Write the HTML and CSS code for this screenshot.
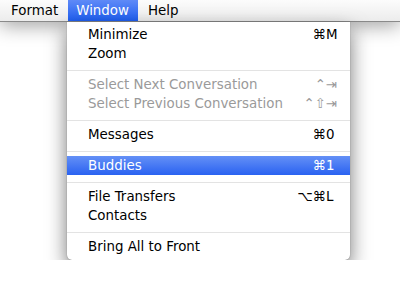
FILE: index.html
```html
<!DOCTYPE html>
<html lang="en">
<head>
<meta charset="UTF-8">
<meta name="viewport" content="width=device-width, initial-scale=1.0">
<title>Window Menu</title>
<link rel="stylesheet" href="styles.css">
</head>
<body>

<div class="menubar">
  <span class="bar-item format">Format</span>
  <span class="bar-item active">Window</span>
  <span class="bar-item">Help</span>
</div>

<div class="menu">
  <div class="item"><span>Minimize</span><span class="keys"><span class="mods">⌘</span><span class="key">M</span></span></div>
  <div class="item"><span>Zoom</span></div>
  <div class="sep"></div>
  <div class="item disabled"><span>Select Next Conversation</span><span class="keys"><span class="mods">⌃</span><span class="key">⇥</span></span></div>
  <div class="item disabled"><span>Select Previous Conversation</span><span class="keys"><span class="mods">⌃⇧</span><span class="key">⇥</span></span></div>
  <div class="sep"></div>
  <div class="item"><span>Messages</span><span class="keys"><span class="mods">⌘</span><span class="key">0</span></span></div>
  <div class="sep"></div>
  <div class="item selected"><span>Buddies</span><span class="keys"><span class="mods">⌘</span><span class="key">1</span></span></div>
  <div class="sep"></div>
  <div class="item"><span>File Transfers</span><span class="keys"><span class="mods">⌥⌘</span><span class="key">L</span></span></div>
  <div class="item"><span>Contacts</span></div>
  <div class="sep"></div>
  <div class="item"><span>Bring All to Front</span></div>
</div>

</body>
</html>
```

FILE: styles.css
```css
body {
  margin: 0;
  background: #fff;
  font-family: "DejaVu Sans", sans-serif;
  font-size: 13.4px;
  color: #000;
}
.menubar {
  height: 21px;
  display: flex;
  align-items: stretch;
  background: linear-gradient(#fcfcfc, #ececec);
  border-bottom: 1px solid #8a8a8a;
  box-shadow: 0 3px 20px rgba(0, 0, 0, 0.4);
  position: relative;
  z-index: 1;
}
.bar-item {
  display: flex;
  align-items: center;
  padding: 0 10px;
}
.bar-item.format {
  padding-left: 11px;
}
.bar-item.active {
  padding: 0 9px 0 8px;
  color: #fff;
  background: linear-gradient(#5f8af7, #1f5ff2);
}
.menu {
  width: 283px;
  margin-left: 67px;
  padding: 3px 0 4px;
  background: #fff;
  border-radius: 0 0 5px 5px;
  box-shadow: 0 9px 20px rgba(0, 0, 0, 0.55), 0 0 1px rgba(0, 0, 0, 0.5);
  position: relative;
  z-index: 2;
}
.item {
  height: 19px;
  display: flex;
  align-items: center;
  justify-content: space-between;
  padding: 0 12px 0 21px;
}
.item.disabled {
  color: #9a9a9a;
}
.item.selected {
  color: #fff;
  background: linear-gradient(#6490f6, #2a62f1);
}
.keys {
  display: flex;
}
.key {
  width: 12px;
}
.sep {
  height: 1px;
  margin: 7px 0 4px;
  background: #e3e3e3;
}
```
